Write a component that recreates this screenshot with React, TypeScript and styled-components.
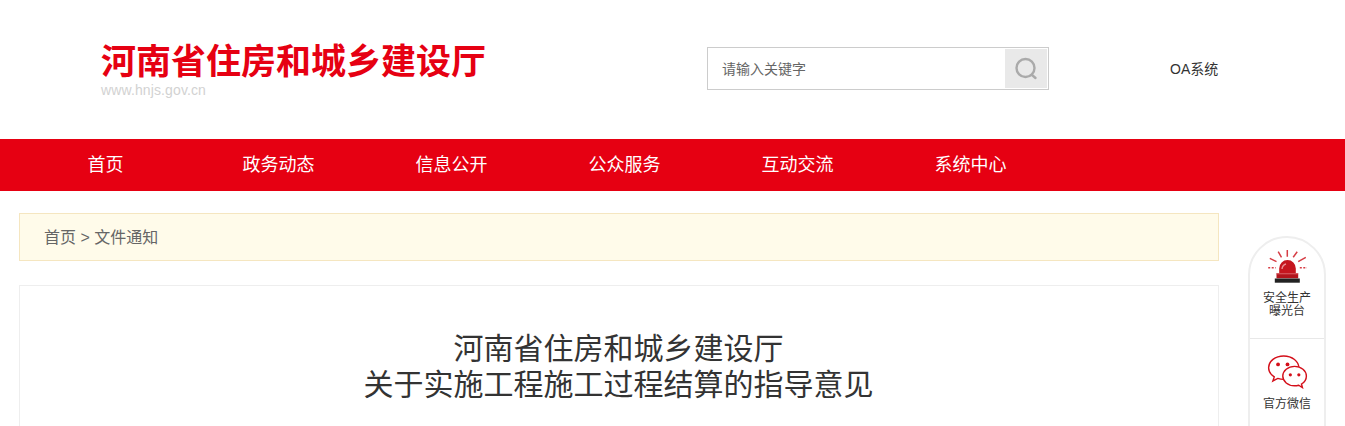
import React from "react";
import styled, { createGlobalStyle } from "styled-components";

const Global = createGlobalStyle`
	html, body {
		margin: 0;
		padding: 0;
		height: 426px;
		overflow: hidden;
		background: #fff;
		font-family: "Liberation Sans", "Noto Sans CJK SC", sans-serif;
	}
`;

const Page = styled.div`
	position: relative;
	width: 1345px;
	height: 426px;
	overflow: hidden;
`;

const Header = styled.header`
	height: 139px;
	padding-left: 101px;
	display: flex;
	align-items: flex-start;
`;

const Brand = styled.div`
	width: 606px;
	padding-top: 36px;
`;

const BrandTitle = styled.div`
	font-family: "Noto Sans CJK SC", sans-serif;
	font-size: 35px;
	font-weight: 700;
	line-height: 46px;
	color: #e60012;
`;

const BrandUrl = styled.div`
	font-size: 14px;
	letter-spacing: 0.12px;
	line-height: 16px;
	color: #d2d2d2;
`;

const Search = styled.div`
	box-sizing: border-box;
	margin-top: 47px;
	width: 342px;
	height: 43px;
	border: 1px solid #ccc;
	padding: 1px;
	display: flex;
	align-items: stretch;
`;

const SearchInput = styled.div`
	flex: 1;
	padding-left: 13px;
	font-size: 14px;
	line-height: 41px;
	color: #666;
`;

const SearchButton = styled.div`
	width: 42px;
	background: #e9e9e9;
	display: flex;
	align-items: center;
	justify-content: center;
`;

const OaLink = styled.a`
	margin-left: 121px;
	margin-top: 60px;
	font-size: 14px;
	line-height: 18px;
	color: #333;
`;

const Nav = styled.nav`
	height: 52px;
	background: #e60012;
	padding-left: 19px;
	display: flex;
`;

const NavItem = styled.a`
	width: 173px;
	text-align: center;
	font-size: 18px;
	line-height: 52px;
	color: #fff;
`;

const Content = styled.main`
	width: 1200px;
	margin-left: 19px;
	padding-top: 22px;
`;

const Crumbs = styled.div`
	box-sizing: border-box;
	height: 48px;
	padding-left: 24px;
	border: 1px solid #f5e6c0;
	background: #fffbea;
	font-size: 16px;
	line-height: 47px;
	color: #666;
`;

const Article = styled.article`
	box-sizing: border-box;
	margin-top: 24px;
	height: 300px;
	border: 1px solid #eee;
	padding-top: 42px;
	padding-right: 1px;
`;

const ArticleTitle = styled.h1`
	margin: 0;
	text-align: center;
	font-family: "Noto Sans CJK SC", sans-serif;
	font-size: 30px;
	font-weight: 400;
	line-height: 36px;
	color: #333;
`;

const SideBar = styled.aside`
	position: absolute;
	left: 1248px;
	top: 236px;
	box-sizing: border-box;
	width: 78px;
	height: 260px;
	background: #fff;
	border: 2px solid #eee;
	border-radius: 39px 39px 0 0;
`;

const SideItem = styled.div<{ $height: number }>`
	height: ${(p) => p.$height}px;
	box-sizing: border-box;
	display: flex;
	flex-direction: column;
	align-items: center;
	border-bottom: 1px solid #e8e8e8;
`;

const SideIcon = styled.svg<{ $top: number; $bottom: number }>`
	margin-top: ${(p) => p.$top}px;
	margin-bottom: ${(p) => p.$bottom}px;
`;

const SideLabel = styled.div`
	font-size: 12px;
	line-height: 13px;
	text-align: center;
	color: #333;
`;

const AlarmIcon = () => (
	<SideIcon $top={10} $bottom={8} width="41" height="36" viewBox="0 0 41 36">
		<g stroke="#d63d45" strokeWidth="1.5" fill="none">
			<path d="M20.300 2v6.700M11.200 3.700l3.300 5.600M30.200 3.700l-4 5.600M2.800 10.300l6.700 3.400M38.800 9.300l-7.600 4.400" />
			<path d="M1.200 19.700h7.600M32.800 19.700H40" strokeDasharray="2 1.500" />
		</g>
		<path d="M12.200 25.500v-5a8.300 8.500 0 0 1 16.600 0v5z" fill="#c5161f" />
		<path d="M15 21a5.500 6 0 0 1 4-5" stroke="#ea8f93" strokeWidth="1.400" fill="none" />
		<rect x="9.500" y="25.300" width="21.700" height="5" fill="#b2151d" />
		<rect x="9.500" y="25.300" width="21.700" height="1" fill="#dc5a60" />
		<rect x="7.800" y="30.500" width="25" height="4.200" fill="#222" />
	</SideIcon>
);

const WechatIcon = () => (
	<SideIcon $top={16} $bottom={9} width="41" height="34" viewBox="0 0 42 36">
		<g fill="#fff" stroke="#d40f1a" strokeWidth="1.5">
			<path d="M17 1C8 1 1 6.600 1 13.500c0 4 2.400 7.400 6 9.700L5.500 27.500l5.200-2.700c2 .6 4.100 1 6.300 1 9 0 16-5.600 16-12.300S26 1 17 1z" />
			<path d="M28.500 12C21.500 12 16 16.600 16 22.300s5.500 10.300 12.500 10.300c1.500 0 3-.2 4.300-.6l4 2.500-1-3.800c3.300-1.900 5.200-4.900 5.200-8.400C41 16.600 35.500 12 28.500 12z" />
		</g>
		<g fill="#d40f1a">
			<circle cx="11" cy="10" r="2" />
			<circle cx="21" cy="10" r="2" />
			<circle cx="24" cy="21" r="1.700" />
			<circle cx="33" cy="21" r="1.700" />
		</g>
	</SideIcon>
);

const navItems = ["首页", "政务动态", "信息公开", "公众服务", "互动交流", "系统中心"];

export default function App() {
	return (
		<Page>
			<Global />
			<Header>
				<Brand>
					<BrandTitle>河南省住房和城乡建设厅</BrandTitle>
					<BrandUrl>www.hnjs.gov.cn</BrandUrl>
				</Brand>
				<Search>
					<SearchInput>请输入关键字</SearchInput>
					<SearchButton>
						<svg width="24" height="24" viewBox="0 0 24 24" fill="none" stroke="#aaa" strokeWidth="2.400">
							<circle cx="11.500" cy="11" r="9" />
							<path d="M18 18l3.500 3" strokeLinecap="round" />
						</svg>
					</SearchButton>
				</Search>
				<OaLink>OA系统</OaLink>
			</Header>
			<Nav>
				{navItems.map((item) => (
					<NavItem key={item}>{item}</NavItem>
				))}
			</Nav>
			<Content>
				<Crumbs>首页 &gt; 文件通知</Crumbs>
				<Article>
					<ArticleTitle>
						河南省住房和城乡建设厅
						<br />
						关于实施工程施工过程结算的指导意见
					</ArticleTitle>
				</Article>
			</Content>
			<SideBar>
				<SideItem $height={101}>
					<AlarmIcon />
					<SideLabel>
						安全生产
						<br />
						曝光台
					</SideLabel>
				</SideItem>
				<SideItem $height={100}>
					<WechatIcon />
					<SideLabel>官方微信</SideLabel>
				</SideItem>
			</SideBar>
		</Page>
	);
}
